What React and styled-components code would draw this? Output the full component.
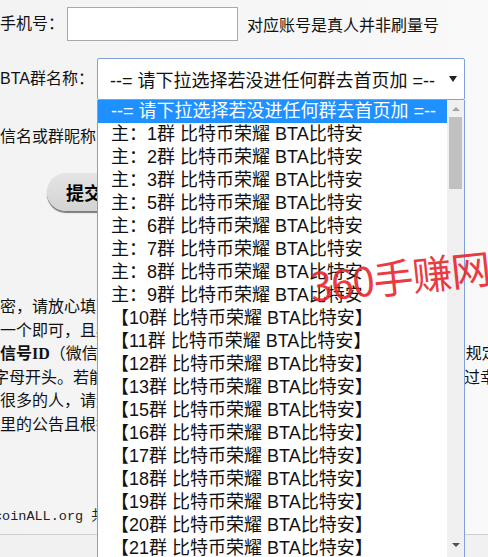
import React from "react";
import styled, {createGlobalStyle} from "styled-components";

const groups = [
    "主：1群 比特币荣耀 BTA比特安",
    "主：2群 比特币荣耀 BTA比特安",
    "主：3群 比特币荣耀 BTA比特安",
    "主：5群 比特币荣耀 BTA比特安",
    "主：6群 比特币荣耀 BTA比特安",
    "主：7群 比特币荣耀 BTA比特安",
    "主：8群 比特币荣耀 BTA比特安",
    "主：9群 比特币荣耀 BTA比特安",
    "【10群 比特币荣耀 BTA比特安】",
    "【11群 比特币荣耀 BTA比特安】",
    "【12群 比特币荣耀 BTA比特安】",
    "【13群 比特币荣耀 BTA比特安】",
    "【15群 比特币荣耀 BTA比特安】",
    "【16群 比特币荣耀 BTA比特安】",
    "【17群 比特币荣耀 BTA比特安】",
    "【18群 比特币荣耀 BTA比特安】",
    "【19群 比特币荣耀 BTA比特安】",
    "【20群 比特币荣耀 BTA比特安】",
    "【21群 比特币荣耀 BTA比特安】",
    "【22群 比特币荣耀 BTA比特安】",
]

const placeholder = "--= 请下拉选择若没进任何群去首页加 =--"

const App = () => {
    return (
        <Page>
            <GlobalStyle/>
            <Form>
                <Row>
                    <Label>手机号：</Label>
                    <Input type="text"/>
                    <Hint>对应账号是真人并非刷量号</Hint>
                </Row>
                <Row $top={17}>
                    <Label $width={97}>BTA群名称：</Label>
                    <Select>
                        <SelectText>{placeholder}</SelectText>
                        <Arrow/>
                    </Select>
                </Row>
                <Row $top={20}>
                    <Label $width={97}>信名或群昵称：</Label>
                    <Input type="text"/>
                </Row>
                <ButtonRow>
                    <Button type="button">提交</Button>
                </ButtonRow>
            </Form>

            <Notes>
                <Line>密，请放心填写，我们不会泄露您的任何信息</Line>
                <Line>一个即可，且必须是您本人正在使用的号码</Line>
                <Line><b>信号ID</b>（微信号不是昵称，请在微信个人信息页面中查看，按官方规定的格式填写）</Line>
                <Line $shift={-7}>字母开头。若能提供已绑定银行卡的实名认证微信号或QQ，审核通过幸运</Line>
                <Line>很多的人，请选择您最常发言的那个群</Line>
                <Line>里的公告且根据要求完成所有步骤</Line>
            </Notes>

            <Credit>coinALL.org 共</Credit>
            <Footer/>

            <DropList>
                <Options>
                    <Option $active>{placeholder}</Option>
                    {groups.map(g => <Option key={g}>{g}</Option>)}
                </Options>
                <ScrollBar>
                    <ScrollArrow $up/>
                    <Thumb/>
                    <ScrollSpace/>
                    <ScrollArrow/>
                </ScrollBar>
            </DropList>

            <Stamp>360手赚网</Stamp>
        </Page>
    )
}

const GlobalStyle = createGlobalStyle`
  html, body {
    margin: 0;
    padding: 0;
    overflow: hidden;
    background: #f6f6f6;
  }
  * {
    box-sizing: border-box;
  }
`

const Page = styled('div')`
  position: relative;
  width: 488px;
  height: 557px;
  overflow: hidden;
  background: linear-gradient(90deg, #f3f3f3, #f9f9f9);
  font-family: "Liberation Sans", "Noto Sans CJK SC", sans-serif;
  font-size: 16px;
  color: #111;
  display: flex;
  flex-direction: column;
`

const Form = styled('div')`
  padding-top: 7px;
  display: flex;
  flex-direction: column;
`

const Row = styled('div')`
  display: flex;
  align-items: center;
  margin-top: ${p => p.$top || 0}px;
`

const Label = styled('span')`
  width: ${p => p.$width || 67}px;
  flex-shrink: 0;
  white-space: nowrap;
  font-size: 16px;
  line-height: 20px;
`

const Input = styled('input')`
  width: 171px;
  height: 34px;
  border: 1px solid #a9a9a9;
  background: #fff;
  outline: none;
  padding: 0 6px;
`

const Hint = styled('span')`
  margin-left: 9px;
  white-space: nowrap;
  font-size: 16px;
`

const Select = styled('div')`
  width: 368px;
  height: 42px;
  border: 1px solid #7ea1d9;
  border-radius: 2px;
  background: #fff;
  display: flex;
  align-items: center;
  padding: 0 6px 0 12px;
`

const SelectText = styled('span')`
  flex: 1;
  font-size: 18px;
  white-space: nowrap;
  color: #111;
`

const Arrow = styled('span')`
  width: 0;
  height: 0;
  border-left: 4px solid transparent;
  border-right: 4px solid transparent;
  border-top: 6px solid #222;
  margin-right: 1px;
`

const ButtonRow = styled('div')`
  margin-top: 19px;
  padding-left: 47px;
  display: flex;
`

const Button = styled('button')`
  width: 110px;
  height: 38px;
  border: none;
  border-radius: 20px;
  background: linear-gradient(#e4e4e4, #d3d3d3);
  box-shadow: 0 2px 1px #7c7c7c;
  font-family: "Noto Sans CJK SC", sans-serif;
  font-size: 18px;
  font-weight: bold;
  color: #000;
  text-align: left;
  padding-left: 19px;
  cursor: pointer;
`

const Notes = styled('div')`
  margin-top: 84px;
  display: flex;
  flex-direction: column;
  font-family: "Liberation Serif", "Noto Sans CJK SC", serif;
`

const Line = styled('div')`
  white-space: nowrap;
  line-height: 23.5px;
  height: 23.5px;
  margin-left: ${p => p.$shift || 0}px;

  & b {
    font-weight: bold;
  }
`

const Credit = styled('div')`
  margin-top: 71px;
  margin-left: -6px;
  font-family: "Liberation Mono", "Noto Sans CJK SC", monospace;
  font-size: 13.5px;
  line-height: 20px;
  color: #222;
  white-space: nowrap;
`

const Footer = styled('div')`
  margin-top: 7px;
  flex: 1;
  border-top: 1px solid #cfcfcf;
  background: #f1f1f1;
`

const DropList = styled('div')`
  position: absolute;
  left: 97px;
  top: 100px;
  width: 368px;
  height: 480px;
  border: 1px solid #7ea1d9;
  border-top: none;
  background: #fff;
  display: flex;
`

const Options = styled('div')`
  flex: 1;
  overflow: hidden;
  display: flex;
  flex-direction: column;
`

const Option = styled('div')`
  height: 23px;
  flex-shrink: 0;
  line-height: 23px;
  padding-left: 13px;
  font-size: 18px;
  white-space: nowrap;
  background: ${p => p.$active ? '#1e90ff' : 'transparent'};
  color: ${p => p.$active ? '#fff' : '#111'};
`

const ScrollBar = styled('div')`
  width: 17px;
  background: #f0f0f0;
  display: flex;
  flex-direction: column;
  align-items: center;
  padding: 0 2px;
`

const ScrollArrow = styled('div')`
  width: 17px;
  height: 17px;
  flex-shrink: 0;
  display: flex;
  align-items: center;
  justify-content: center;

  &::after {
    content: "";
    width: 0;
    height: 0;
    border-left: 4px solid transparent;
    border-right: 4px solid transparent;
    ${p => p.$up
            ? 'border-bottom: 4px solid #a3a3a3;'
            : 'border-top: 4px solid #505050;'}
  }
`

const Thumb = styled('div')`
  width: 13px;
  height: 72px;
  flex-shrink: 0;
  background: #c1c1c1;
`

const ScrollSpace = styled('div')`
  height: 347px;
  flex-shrink: 0;
`

const Stamp = styled('div')`
  position: absolute;
  left: 310px;
  top: 262px;
  font-family: "Noto Sans CJK SC", sans-serif;
  font-size: 40px;
  line-height: 46px;
  letter-spacing: -1px;
  color: #e8202a;
  white-space: nowrap;
  transform: rotate(-6deg);
  transform-origin: left center;
  opacity: 0.88;
  pointer-events: none;
`

export default App;
